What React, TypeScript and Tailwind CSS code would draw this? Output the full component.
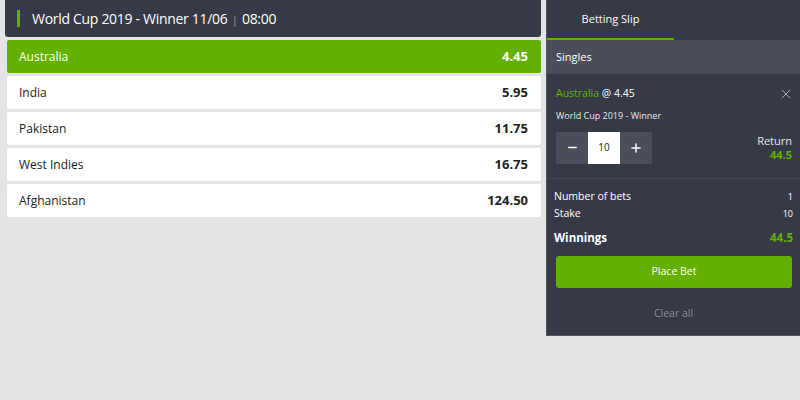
import React from 'react';
import { X, Minus, Plus } from 'lucide-react';

const SELECTIONS = [
  { name: 'Australia', odds: '4.45', selected: true },
  { name: 'India', odds: '5.95' },
  { name: 'Pakistan', odds: '11.75' },
  { name: 'West Indies', odds: '16.75' },
  { name: 'Afghanistan', odds: '124.50' },
];

const font = { fontFamily: '"Open Sans", "Liberation Sans", sans-serif' };

export default function App() {
  return (
    <div className="w-[800px] h-[400px] bg-[#e4e4e4] flex" style={font}>
      <div className="w-[546px] pl-[5px] pr-[5px] flex flex-col">
        <div className="h-[37px] bg-[#363a46] rounded-b-[3px] flex items-center pl-[12px]">
          <span className="w-[3px] h-[17px] bg-[#64b000]" />
          <span className="ml-[12px] text-[14px] text-white tracking-[-0.3px]">
            World Cup 2019 - Winner 11/06 <span className="text-[#9a9ca3] text-[11px] mx-[1px]">|</span> 08:00
          </span>
        </div>
        <div className="flex flex-col gap-[3px] mt-[3px] pl-[2px]">
          {SELECTIONS.map((s) => (
            <div
              key={s.name}
              className={`h-[33px] rounded-[2px] flex items-center justify-between pl-[12px] pr-[13px] ${
                s.selected ? 'bg-[#64b000] text-white' : 'bg-white text-[#222]'
              }`}
            >
              <span className="text-[12px]">{s.name}</span>
              <span className="text-[13px] font-bold">{s.odds}</span>
            </div>
          ))}
        </div>
      </div>

      <div className="w-[254px] h-[336px] bg-[#363a46] border-l border-b border-[#55585f] flex flex-col text-white">
        <div className="h-[40px] flex">
          <div className="w-[127px] flex items-center justify-center border-b-[2px] border-[#64b000] text-[11px]">
            Betting Slip
          </div>
          <div className="flex-1" />
        </div>
        <div className="h-[34px] bg-[#4a4e5a] flex items-center pl-[9px] text-[11px]">Singles</div>

        <div className="px-[9px] pt-[12px] pb-[14px] border-b border-[#454955]">
          <div className="flex items-center justify-between">
            <span className="text-[10.5px]">
              <span className="text-[#64b000]">Australia</span> @ 4.45
            </span>
            <X className="w-[16px] h-[16px] text-[#a9abb1] mr-[-3px]" strokeWidth={1.5} />
          </div>
          <div className="text-[9px] mt-[7px] text-[#e7e8ea]">World Cup 2019 - Winner</div>
          <div className="flex items-center justify-between mt-[9px]">
            <div className="flex h-[32px] w-[96px] bg-[#4a4e5a] rounded-[3px] overflow-hidden">
              <div className="w-[32px] flex items-center justify-center">
                <Minus className="w-[13px] h-[13px]" strokeWidth={2.5} />
              </div>
              <div className="w-[32px] bg-white text-[#222] text-[10px] flex items-center justify-center">10</div>
              <div className="w-[32px] flex items-center justify-center">
                <Plus className="w-[14px] h-[14px]" strokeWidth={2.5} />
              </div>
            </div>
            <div className="flex flex-col items-end text-[11px] leading-[14px] mr-[-1px]">
              <span className="text-[#e7e8ea]">Return</span>
              <span className="text-[#64b000] font-bold">44.5</span>
            </div>
          </div>
        </div>

        <div className="px-[7px] pt-[10px]">
          <div className="flex justify-between text-[10.5px] h-[17px] items-center">
            <span>Number of bets</span>
            <span className="text-[9px]">1</span>
          </div>
          <div className="flex justify-between text-[10.5px] h-[17px] items-center">
            <span>Stake</span>
            <span className="text-[9px]">10</span>
          </div>
          <div className="flex justify-between h-[24px] items-center mt-[3px]">
            <span className="text-[11.5px] font-bold">Winnings</span>
            <span className="text-[11.5px] font-bold text-[#64b000]">44.5</span>
          </div>
          <button className="mt-[6px] ml-[2px] w-[236px] h-[32px] bg-[#64b000] rounded-[3px] text-[10.5px] text-white">
            Place Bet
          </button>
          <div className="text-center text-[10.5px] text-[#8d9097] mt-[18px]">Clear all</div>
        </div>
      </div>
    </div>
  );
}
